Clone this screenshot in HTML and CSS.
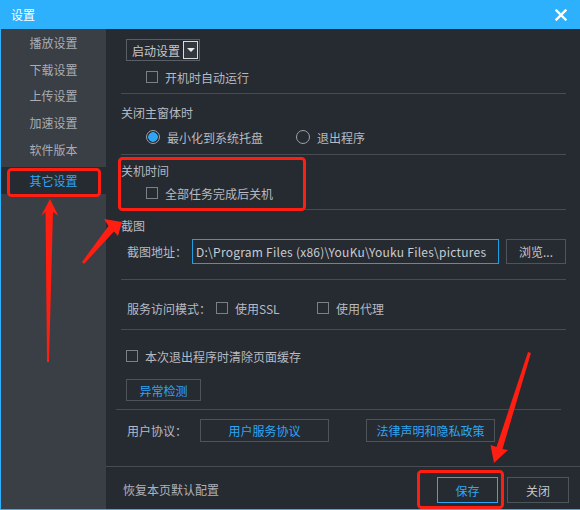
FILE: index.html
```html
<!DOCTYPE html>
<html lang="zh-CN">
<head>
<meta charset="utf-8">
<title>设置</title>
<link rel="stylesheet" href="styles.css">
</head>
<body>
<div class="window">
  <header class="titlebar">
    <span class="title">设置</span>
    <svg class="close" width="12" height="12" viewBox="0 0 12 12"><path d="M1.5 1.5 L10.5 10.5 M10.5 1.5 L1.5 10.5" stroke="#fff" stroke-width="2.4" stroke-linecap="square"/></svg>
  </header>
  <div class="frame">
    <nav class="sidebar">
      <div class="nav-item">播放设置</div>
      <div class="nav-item">下载设置</div>
      <div class="nav-item">上传设置</div>
      <div class="nav-item">加速设置</div>
      <div class="nav-item">软件版本</div>
      <div class="nav-item active">其它设置</div>
    </nav>
    <main class="content">
      <div class="panel">
        <section class="sec sec-start">
          <div class="select"><span class="select-text">启动设置</span><span class="select-arrow"></span></div>
          <div class="row row-start indent"><span class="box"></span><span>开机时自动运行</span></div>
        </section>
        <div class="sep"></div>
        <section class="sec sec-close">
          <div class="heading heading-24">关闭主窗体时</div>
          <div class="row row-24 indent">
            <span class="radio-opt first"><span class="radio checked"></span><span>最小化到系统托盘</span></span>
            <span class="radio-opt"><span class="radio"></span><span>退出程序</span></span>
          </div>
        </section>
        <div class="sep"></div>
        <section class="sec sec-shutdown">
          <div class="heading">关机时间</div>
          <div class="row indent"><span class="box"></span><span>全部任务完成后关机</span></div>
        </section>
        <div class="sep"></div>
        <section class="sec sec-capture">
          <div class="heading">截图</div>
          <div class="row row-path">
            <span class="label label-path">截图地址：</span>
            <span class="input">D:\Program Files (x86)\YouKu\Youku Files\pictures</span>
            <span class="btn btn-browse">浏览...</span>
          </div>
        </section>
        <div class="sep"></div>
        <section class="sec sec-service">
          <div class="row">
            <span class="label label-service">服务访问模式：</span>
            <span class="check-opt first"><span class="box"></span><span>使用SSL</span></span>
            <span class="check-opt"><span class="box"></span><span>使用代理</span></span>
          </div>
        </section>
        <div class="sep"></div>
        <section class="sec sec-cache">
          <div class="row indent-small"><span class="box"></span><span>本次退出程序时清除页面缓存</span></div>
          <span class="btn btn-blue btn-check">异常检测</span>
        </section>
        <div class="sep sep-wide"></div>
        <section class="sec sec-agree">
          <div class="row">
            <span class="label label-agree">用户协议：</span>
            <span class="btn btn-blue btn-agree">用户服务协议</span>
            <span class="btn btn-blue btn-agree btn-legal">法律声明和隐私政策</span>
          </div>
        </section>
      </div>
      <footer class="footer">
        <span class="restore">恢复本页默认配置</span>
        <div class="actions">
          <span class="btn btn-save">保存</span>
          <span class="btn btn-close">关闭</span>
        </div>
      </footer>
    </main>
  </div>
  <svg class="annotations" width="580" height="510" viewBox="0 0 580 510">
    <g fill="none" stroke="#ff1e12" stroke-width="3">
      <rect x="8.5" y="169.5" width="91" height="26" rx="3"/>
      <rect x="119.5" y="158.5" width="185" height="51" rx="3"/>
      <rect x="418.5" y="471.5" width="84" height="36" rx="3"/>
    </g>
    <g fill="#ff1e12">
      <polygon points="50,199 58.5,216 53,212 49,362 47,362 45.5,212 41,216"/>
      <polygon points="122,222 118,236 114,231.5 84,264 82,262 108.5,226 104,219"/>
      <polygon points="494,463 490.5,445 496.5,447 528,352 531,353 502.5,449 508,450"/>
    </g>
  </svg>
</div>
</body>
</html>
```

FILE: styles.css
```css
* {
  box-sizing: border-box;
  margin: 0;
  padding: 0;
}

html,
body {
  width: 580px;
  height: 510px;
  overflow: hidden;
}

body {
  font-family: "Noto Sans CJK SC", "Microsoft YaHei", sans-serif;
  font-size: 12px;
  color: #b7bbc1;
  background: #2eb1fd;
}

.window {
  position: relative;
  width: 580px;
  height: 510px;
  background: #2eb1fd;
  display: flex;
  flex-direction: column;
}

.titlebar {
  height: 29px;
  flex: none;
  display: flex;
  align-items: center;
  justify-content: space-between;
  padding: 0 13px 0 11px;
  color: #fff;
}

.title {
  font-size: 12px;
}

.close {
  display: block;
}

.frame {
  flex: 1;
  display: flex;
  margin: 0 1px 1px 1px;
  min-height: 0;
}

.sidebar {
  width: 105px;
  flex: none;
  background: #3a3e45;
  padding-top: 1px;
}

.nav-item {
  height: 26.7px;
  line-height: 26.7px;
  text-align: center;
  color: #a9adb3;
}

.nav-item.active {
  height: 27px;
  line-height: 27px;
  margin-top: 3.5px;
  background: #262a31;
  color: #2ea6f5;
}

.content {
  flex: 1;
  background: #262a31;
  display: flex;
  flex-direction: column;
}

.panel {
  flex: 1;
  padding: 0 16px 0 15px;
}

.sep {
  height: 1px;
  background: #474b52;
}

.sep-wide {
  margin: 0 5px 0 -5px;
}

.sec-start {
  padding-top: 10px;
}

.sec-close {
  padding: 7px 0 5px;
}

.sec-shutdown {
  padding: 5px 0 5px;
}

.sec-capture {
  padding: 5px 0 15px;
}

.sec-service {
  padding: 17px 0 10px;
}

.sec-cache {
  padding: 15px 0 8px;
}

.sec-agree {
  padding-top: 9px;
}

.heading {
  height: 22px;
  line-height: 22px;
  color: #b7bbc1;
}

.heading-24 {
  height: 24px;
  line-height: 24px;
}

.row {
  height: 22px;
  display: flex;
  align-items: center;
}

.row-24 {
  height: 24px;
}

.row-start {
  height: 32px;
}

.indent {
  padding-left: 25px;
}

.indent-small {
  padding-left: 5px;
}

.box {
  width: 12px;
  height: 12px;
  border: 1px solid #7b7f86;
  margin-right: 7px;
  flex: none;
}

.select {
  margin-left: 5px;
  width: 74px;
  height: 22px;
  border: 1px solid #5a5e65;
  display: flex;
  align-items: center;
  justify-content: space-between;
  padding: 0 1px 0 5px;
}

.select-text {
  color: #c4c8ce;
}

.select-arrow {
  width: 15px;
  height: 18px;
  border: 1px solid #d9dbde;
  background: #33373e;
  display: flex;
  align-items: center;
  justify-content: center;
}

.select-arrow::after {
  content: "";
  border-left: 4px solid transparent;
  border-right: 4px solid transparent;
  border-top: 4px solid #e8e8e8;
}

.radio-opt {
  display: flex;
  align-items: center;
}

.radio-opt.first {
  width: 150px;
}

.radio {
  width: 14px;
  height: 14px;
  border: 1px solid #9ea2a8;
  border-radius: 50%;
  margin-right: 7px;
  flex: none;
}

.radio.checked {
  background: radial-gradient(circle, #2ea6f5 0 4.5px, transparent 5px);
}

.label {
  color: #b7bbc1;
  flex: none;
}

.label-path {
  margin-left: 6px;
  width: 65px;
}

.row-path {
  height: 25px;
  margin-top: 2px;
}

.input {
  width: 307px;
  height: 25px;
  border: 1px solid #1f9fe0;
  line-height: 23px;
  padding-left: 3px;
  letter-spacing: 0.25px;
  color: #c8ccd2;
  white-space: nowrap;
  overflow: hidden;
  flex: none;
}

.btn {
  display: flex;
  align-items: center;
  justify-content: center;
  border: 1px solid #4f535a;
  color: #b7bbc1;
  flex: none;
}

.btn-blue {
  color: #2ea6f5;
}

.btn-browse {
  margin-left: 7px;
  width: 60px;
  height: 25px;
  color: #c4c8ce;
}

.label-service {
  margin-left: 6px;
  width: 89px;
}

.check-opt {
  display: flex;
  align-items: center;
}

.check-opt.first {
  width: 101px;
}

.btn-check {
  margin-top: 12px;
  margin-left: 5px;
  width: 75px;
  height: 22px;
}

.label-agree {
  margin-left: 6px;
  width: 73px;
}

.btn-agree {
  width: 129px;
  height: 23px;
}

.btn-legal {
  margin-left: 37px;
}

.footer {
  height: 43px;
  flex: none;
  border-top: 1px solid #474b52;
  display: flex;
  align-items: flex-start;
  justify-content: space-between;
  padding: 10px 13px 0 17px;
}

.restore {
  line-height: 26px;
  color: #aeb2b8;
}

.actions {
  display: flex;
  gap: 9px;
}

.btn-save {
  width: 61px;
  height: 26px;
  border-color: #2ea6f5;
  color: #2ea6f5;
}

.btn-close {
  width: 62px;
  height: 26px;
  color: #c4c8ce;
}

.annotations {
  position: absolute;
  left: 0;
  top: 0;
  pointer-events: none;
}
```
